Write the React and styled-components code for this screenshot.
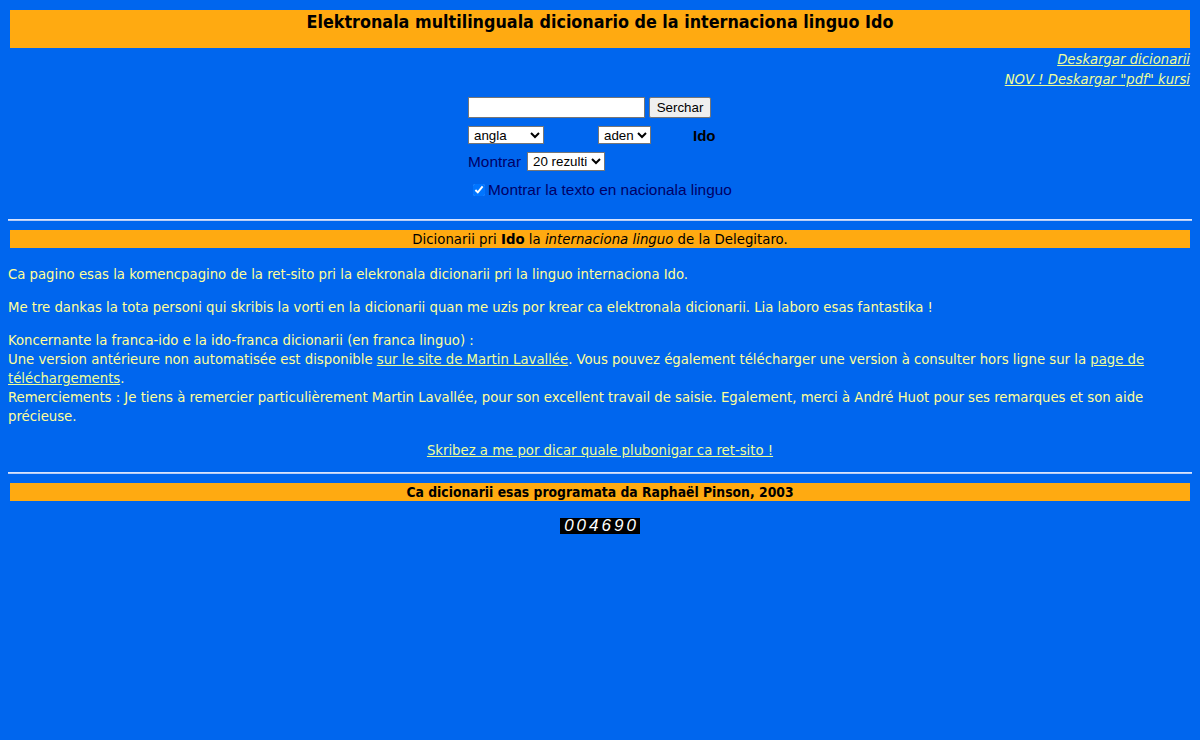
import React from "react";
import styled, { createGlobalStyle } from "styled-components";

const Global = createGlobalStyle`
  html, body { background: #0066ee; }
  body {
    margin: 8px;
    font-family: "DejaVu Sans Condensed", "DejaVu Sans", "Liberation Sans", sans-serif;
    font-stretch: condensed;
    font-size: 14.72px;
    color: #ffff99;
  }
`;

const Page = styled.div`
  display: flex;
  flex-direction: column;
`;

const Bar = styled.div`
  background: #ffaa11;
  color: #000;
  margin: ${(p) => p.$margin || "2px 2px 0"};
  height: ${(p) => p.$h || 18}px;
  line-height: ${(p) => p.$lh || 18}px;
  text-align: center;
  font-size: ${(p) => p.$size || 14.8}px;
  font-weight: ${(p) => (p.$bold ? "bold" : "normal")};
`;

const TopLinks = styled.div`
  margin-top: 1px;
  padding-right: 2px;
  text-align: right;
  line-height: 20px;
  font-style: italic;
  font-size: 14.7px;
`;

const Link = styled.a`
  color: #eeff99;
  text-decoration: underline;
`;

const Form = styled.div`
  align-self: center;
  display: flex;
  flex-direction: column;
  margin-top: 6px;
  width: 264px;
  font-family: "Liberation Sans", Arial, sans-serif;
  font-stretch: normal;
  color: #000066;
  font-size: 15.4px;
`;

const Row = styled.div`
  display: flex;
  align-items: center;
  height: ${(p) => p.$h}px;
  margin-top: ${(p) => p.$mt || 0}px;
  gap: ${(p) => p.$gap || 0}px;
`;

const Cell = styled.div`
  width: ${(p) => p.$w}px;
  display: flex;
  align-items: center;
`;

const TextInput = styled.input`
  box-sizing: border-box;
  width: 177px;
  height: 21px;
  margin: 0;
  border: 1px solid #767676;
  background: #fff;
  padding: 1px 2px;
  font: 13.33px "Liberation Sans", Arial, sans-serif;
`;

const Button = styled.button`
  box-sizing: border-box;
  margin: 0 0 0 4px;
  width: 62px;
  height: 21px;
  padding: 0;
  border: 1px solid #767676;
  border-radius: 2px;
  background: #efefef;
  color: #000;
  font: 13.33px "Liberation Sans", Arial, sans-serif;
`;

const Select = styled.select`
  box-sizing: border-box;
  width: ${(p) => p.$w}px;
  height: ${(p) => p.$h || 19}px;
  margin: 0;
  padding: 0 0 0 1px;
  border: 1px solid #767676;
  border-radius: 0;
  background: #fff;
  color: #000;
  font: 13.33px "Liberation Sans", Arial, sans-serif;
`;

const Strong = styled.b`
  color: #000;
  font-size: 15px;
`;

const Label = styled.label`
  display: flex;
  align-items: center;
  white-space: nowrap;
`;

const Check = styled.input`
  margin: 0 3px 0 5px;
  width: 12px;
  height: 12px;
`;

const Rule = styled.div`
  height: 0;
  border-top: 1px solid #d8e4ff;
  border-bottom: 1px solid #b8ccf4;
  margin-top: ${(p) => p.$mt}px;
`;

const P = styled.p`
  margin: ${(p) => p.$mt}px 0 0;
  line-height: 19px;
  text-align: ${(p) => p.$align || "left"};
`;

const Counter = styled.div`
  align-self: center;
  margin-top: 17px;
  width: 80px;
  height: 16px;
  background: #000;
  color: #fff;
  font: italic 17px/16px "Liberation Sans", Arial, sans-serif;
  font-stretch: normal;
  letter-spacing: 3px;
  text-indent: 3px;
  text-align: center;
`;

export default function App() {
  return (
    <Page>
      <Global />
      <Bar $h={38} $lh={23} $size={17.8} $bold>
        Elektronala multilinguala dicionario de la internaciona linguo Ido
      </Bar>
      <TopLinks>
        <Link href="#">Deskargar dicionarii</Link>
        <br />
        <Link href="#">NOV ! Deskargar "pdf" kursi</Link>
      </TopLinks>
      <Form>
        <Row $h={24}>
          <TextInput type="text" />
          <Button>Serchar</Button>
        </Row>
        <Row $h={26} $mt={3}>
          <Cell $w={130}>
            <Select $w={76} $h={18} defaultValue="angla">
              <option>angla</option>
            </Select>
          </Cell>
          <Cell $w={95}>
            <Select $w={53} $h={18} defaultValue="aden">
              <option>aden</option>
            </Select>
          </Cell>
          <Strong>Ido</Strong>
        </Row>
        <Row $h={27} $gap={6}>
          Montrar
          <Select $w={78} $h={19} defaultValue="20 rezulti">
            <option>20 rezulti</option>
          </Select>
        </Row>
        <Row $h={30}>
          <Label>
            <Check type="checkbox" defaultChecked />
            Montrar la texto en nacionala linguo
          </Label>
        </Row>
      </Form>
      <Rule $mt={14} />
      <Bar $margin="9px 2px 0">
        Dicionarii pri <b>Ido</b> la <i>internaciona linguo</i> de la Delegitaro.
      </Bar>
      <P $mt={16}>
        Ca pagino esas la komencpagino de la ret-sito pri la elekronala dicionarii pri la linguo internaciona Ido.
      </P>
      <P $mt={14}>
        Me tre dankas la tota personi qui skribis la vorti en la dicionarii quan me uzis por krear ca elektronala
        dicionarii. Lia laboro esas fantastika !
      </P>
      <P $mt={14}>
        Koncernante la franca-ido e la ido-franca dicionarii (en franca linguo) :
        <br />
        Une version antérieure non automatisée est disponible <Link href="#">sur le site de Martin Lavallée</Link>.
        Vous pouvez également télécharger une version à consulter hors ligne sur la{" "}
        <Link href="#">page de téléchargements</Link>.
        <br />
        Remerciements : Je tiens à remercier particulièrement Martin Lavallée, pour son excellent travail de saisie.
        Egalement, merci à André Huot pour ses remarques et son aide précieuse.
      </P>
      <P $mt={15} $align="center">
        <Link href="#">Skribez a me por dicar quale plubonigar ca ret-sito !</Link>
      </P>
      <Rule $mt={13} />
      <Bar $margin="9px 2px 0" $size={13.8} $bold>
        Ca dicionarii esas programata da Raphaël Pinson, 2003
      </Bar>
      <Counter>004690</Counter>
    </Page>
  );
}
